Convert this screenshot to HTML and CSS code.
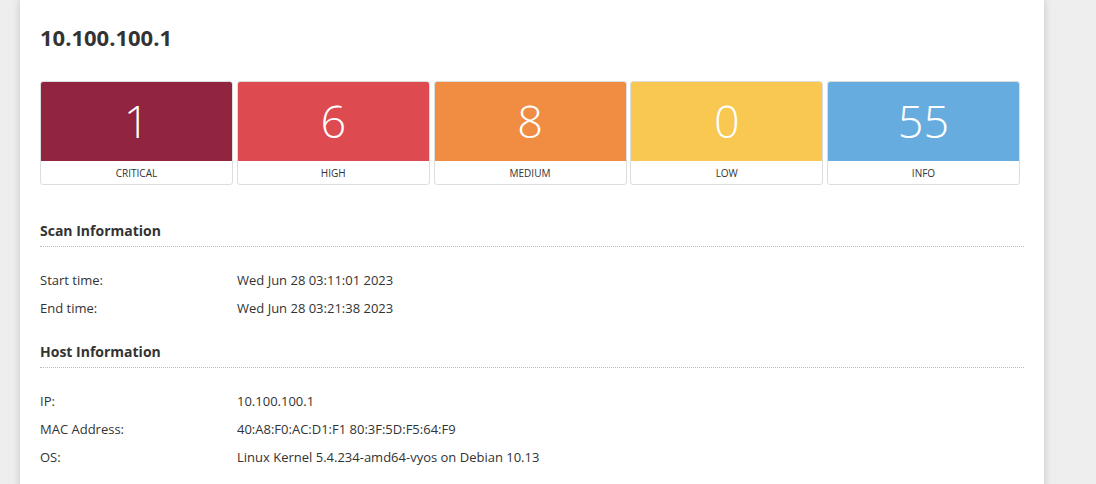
FILE: index.html
```html
<!DOCTYPE html>
<html lang="en">

<head>
    <meta charset="UTF-8">
    <title>10.100.100.1</title>
    <link rel="stylesheet" href="styles.css">
</head>

<body>
    <div class="report">
        <h1>10.100.100.1</h1>

        <div class="summary">
            <div class="sev">
                <div class="count critical">1</div>
                <div class="label">Critical</div>
            </div>
            <div class="sev">
                <div class="count high">6</div>
                <div class="label">High</div>
            </div>
            <div class="sev">
                <div class="count medium">8</div>
                <div class="label">Medium</div>
            </div>
            <div class="sev">
                <div class="count low">0</div>
                <div class="label">Low</div>
            </div>
            <div class="sev">
                <div class="count info">55</div>
                <div class="label">Info</div>
            </div>
        </div>

        <h2>Scan Information</h2>
        <div class="details">
            <div class="row"><span class="key">Start time:</span><span>Wed Jun 28 03:11:01 2023</span></div>
            <div class="row"><span class="key">End time:</span><span>Wed Jun 28 03:21:38 2023</span></div>
        </div>

        <h2>Host Information</h2>
        <div class="details">
            <div class="row"><span class="key">IP:</span><span>10.100.100.1</span></div>
            <div class="row"><span class="key">MAC Address:</span><span>40:A8:F0:AC:D1:F1 80:3F:5D:F5:64:F9</span></div>
            <div class="row"><span class="key">OS:</span><span>Linux Kernel 5.4.234-amd64-vyos on Debian 10.13</span></div>
        </div>
    </div>
</body>

</html>
```

FILE: styles.css
```css
* {
    margin: 0;
    padding: 0;
    box-sizing: border-box;
}

body {
    background: #eeeeee;
    font-family: "Open Sans", "Liberation Sans", sans-serif;
    color: #333;
    font-size: 13px;
}

.report {
    width: 1024px;
    min-height: 484px;
    margin-left: 20px;
    background: #fff;
    padding: 24px 20px 20px 20px;
    box-shadow: 0 0 8px rgba(0, 0, 0, 0.18);
}

h1 {
    font-size: 22px;
    font-weight: 700;
    line-height: 27px;
    color: #333;
    margin-bottom: 30px;
}

.summary {
    display: grid;
    grid-template-columns: repeat(5, 193px);
    column-gap: 3.75px;
}

.sev {
    border: 1px solid #ddd;
    border-radius: 3px;
    overflow: hidden;
}

.count {
    height: 80px;
    margin: -1px -1px 0 -1px;
    color: #fff;
    font-size: 45px;
    font-weight: 300;
    line-height: 80px;
    text-align: center;
}

.critical { background: #91243e; }
.high { background: #dd4b50; }
.medium { background: #f18c43; }
.low { background: #f8c851; }
.info { background: #67acdf; }

.label {
    height: 23px;
    line-height: 25px;
    text-align: center;
    text-transform: uppercase;
    font-size: 10px;
    color: #333;
}

h2 {
    font-size: 14px;
    font-weight: 700;
    line-height: 20px;
    margin-top: 36px;
    padding-bottom: 5px;
    border-bottom: 1px dotted #bbb;
}

.details {
    margin-top: 19px;
}

.row {
    display: flex;
    line-height: 28px;
}

.key {
    width: 197px;
}

h2 + .details + h2 {
    margin-top: 20px;
}
```
